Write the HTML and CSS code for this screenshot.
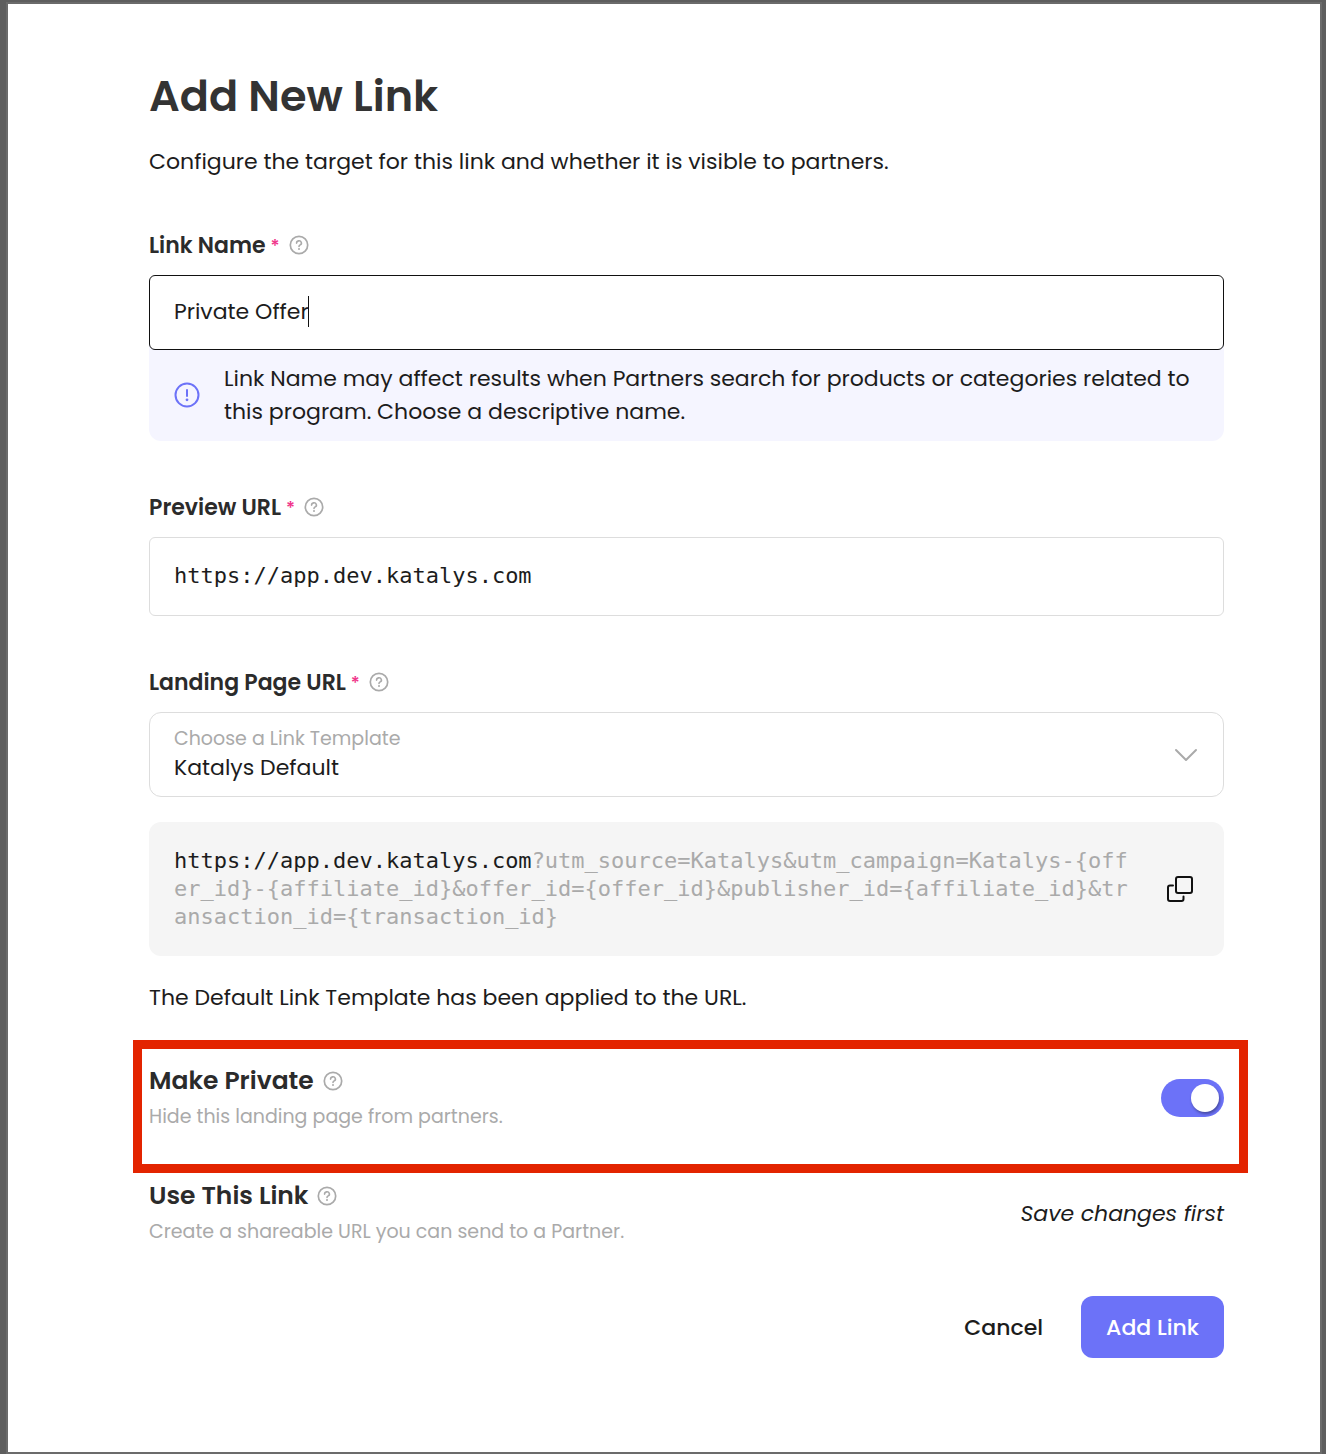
FILE: index.html
```html
<!DOCTYPE html>
<html lang="en">
<head>
    <meta charset="UTF-8">
    <meta name="viewport" content="width=device-width, initial-scale=1.0">
    <title>Add New Link</title>
    <link rel="stylesheet" href="styles.css">
</head>
<body>
    <!-- Shared icons -->
    <svg class="sprite" aria-hidden="true">
        <symbol id="icon-help" viewBox="0 0 20 20">
            <circle cx="10" cy="10" r="8.7" fill="none" stroke="currentColor" stroke-width="1.7"/>
            <path d="M7.6 8.1a2.4 2.2 0 1 1 3.6 1.8c-.8.5-1.2.8-1.2 1.6" fill="none" stroke="currentColor" stroke-width="1.6" stroke-linecap="round"/>
            <circle cx="10" cy="14" r="1" fill="currentColor"/>
        </symbol>
    </svg>

    <form class="dialog" onsubmit="event.preventDefault();">
        <h1>Add New Link</h1>
        <p class="intro">Configure the target for this link and whether it is visible to partners.</p>

        <div class="field">
            <div class="field-label">
                <label for="linkName">Link Name</label>
                <span class="required">*</span>
                <svg class="help"><use href="#icon-help"/></svg>
            </div>
            <div class="input-wrap">
                <input class="input active" type="text" id="linkName" value="Private Offer" required>
                <span class="caret"></span>
            </div>
            <div class="notice">
                <svg class="notice-icon" viewBox="0 0 26 26">
                    <circle cx="13" cy="13" r="11.5" fill="none" stroke="currentColor" stroke-width="2"/>
                    <path d="M13 8v6" stroke="currentColor" stroke-width="2" stroke-linecap="round"/>
                    <circle cx="13" cy="17.8" r="1.4" fill="currentColor"/>
                </svg>
                <p>Link Name may affect results when Partners search for products or categories related to this program. Choose a descriptive name.</p>
            </div>
        </div>

        <div class="field preview">
            <div class="field-label">
                <label for="previewUrl">Preview URL</label>
                <span class="required">*</span>
                <svg class="help"><use href="#icon-help"/></svg>
            </div>
            <input class="input mono" type="text" id="previewUrl" value="https://app.dev.katalys.com" required>
        </div>

        <div class="field">
            <div class="field-label">
                <label for="template">Landing Page URL</label>
                <span class="required">*</span>
                <svg class="help"><use href="#icon-help"/></svg>
            </div>
            <div class="select-wrap">
                <label class="select-hint" for="template">Choose a Link Template</label>
                <select id="template">
                    <option>Katalys Default</option>
                </select>
                <svg class="chevron" viewBox="0 0 24 14">
                    <path d="M2 2l10 10L22 2" fill="none" stroke="currentColor" stroke-width="2" stroke-linecap="round" stroke-linejoin="round"/>
                </svg>
            </div>
            <div class="url-box">
                <code>https://app.dev.katalys.com<span class="params">?utm_source=Katalys&amp;utm_campaign=Katalys-{offer_id}-{affiliate_id}&amp;offer_id={offer_id}&amp;publisher_id={affiliate_id}&amp;transaction_id={transaction_id}</span></code>
                <button class="copy" type="button" aria-label="Copy URL">
                    <svg viewBox="0 0 26 26" fill="none" stroke="currentColor" stroke-width="2" stroke-linejoin="round" stroke-linecap="round">
                        <rect x="9" y="1" width="16" height="16" rx="2"/>
                        <path d="M6 9.500H3a2 2 0 0 0-2 2V23a2 2 0 0 0 2 2h11.500a2 2 0 0 0 2-2v-2.500"/>
                    </svg>
                </button>
            </div>
            <p class="status">The Default Link Template has been applied to the URL.</p>
        </div>

        <div class="option highlight">
            <div>
                <h2><label for="private">Make Private</label> <svg class="help"><use href="#icon-help"/></svg></h2>
                <p class="sub">Hide this landing page from partners.</p>
            </div>
            <input class="toggle" type="checkbox" id="private" checked>
        </div>

        <div class="option">
            <div>
                <h2>Use This Link <svg class="help"><use href="#icon-help"/></svg></h2>
                <p class="sub">Create a shareable URL you can send to a Partner.</p>
            </div>
            <em>Save changes first</em>
        </div>

        <div class="actions">
            <button class="cancel" type="button">Cancel</button>
            <button class="submit" type="submit">Add Link</button>
        </div>
    </form>
</body>
</html>
```
FILE: styles.css
```css
* {
    box-sizing: border-box;
}
body {
    margin: 0;
    padding: 2px 4px 0 6px;
    background-color: #5e5e5e;
    font-family: Poppins, Inter, sans-serif;
    font-size: 22px;
    line-height: 33px;
    color: #1c1c1c;
}
h1, h2, p {
    margin: 0;
}
input, select, button {
    font: inherit;
    color: inherit;
}
.sprite {
    display: none;
}
.dialog {
    padding: 60px 96px 94px 141px;
    border: 2px solid #6b6b6b;
    background-color: #fff;
}
h1 {
    font-size: 43px;
    line-height: 64px;
    font-weight: 600;
    color: #333;
}
.intro {
    margin-top: 17px;
    margin-bottom: 50px;
}
.field-label {
    display: flex;
    align-items: center;
    height: 34px;
    margin-bottom: 13px;
    font-weight: 600;
    color: #2b2b2b;
}
.required {
    margin-left: 5px;
    color: #f0348a;
    font-size: 18px;
    font-weight: 500;
}
.help {
    flex: none;
    width: 20px;
    height: 20px;
    margin-left: 9px;
    color: #aaa;
}
.input-wrap {
    position: relative;
    z-index: 1;
}
.input {
    display: block;
    width: 100%;
    height: 75px;
    padding: 0 24px 2px;
    border: 1px solid #ddd;
    border-radius: 6px;
    background-color: #fff;
    outline: none;
}
.input.active {
    border-color: #111;
}
.mono {
    height: 79px;
    font-family: "DejaVu Sans Mono", monospace;
}
.caret {
    position: absolute;
    top: 21px;
    left: 159px;
    width: 1px;
    height: 31px;
    background-color: #111;
}
.notice {
    display: flex;
    align-items: center;
    gap: 24px;
    margin-top: -6px;
    padding: 18px 25px 13px;
    border-radius: 0 0 12px 12px;
    background-color: #f5f5ff;
}
.notice-icon {
    flex: none;
    width: 26px;
    height: 26px;
    color: #6c72f8;
}
.preview {
    margin: 49px 0;
}
.select-wrap {
    position: relative;
}
.select-wrap select {
    display: block;
    width: 100%;
    height: 85px;
    padding: 26px 60px 0 24px;
    border: 1px solid #ddd;
    border-radius: 12px;
    background-color: #fff;
    appearance: none;
}
.select-hint {
    position: absolute;
    top: 13px;
    left: 25px;
    font-size: 19px;
    line-height: 28px;
    color: #aaa;
}
.chevron {
    position: absolute;
    top: 36px;
    right: 26px;
    width: 24px;
    height: 14px;
    color: #aaa;
    pointer-events: none;
}
.url-box {
    display: flex;
    align-items: center;
    gap: 38px;
    margin-top: 25px;
    padding: 25px 31px 25px 25px;
    border-radius: 12px;
    background-color: #f5f5f5;
}
.url-box code {
    flex: 1;
    font-family: "DejaVu Sans Mono", monospace;
    font-size: 22px;
    line-height: 28px;
    word-break: break-all;
}
.params {
    color: #aaa;
}
.copy {
    flex: none;
    width: 26px;
    height: 26px;
    padding: 0;
    border: none;
    background: none;
    color: #111;
    cursor: pointer;
}
.copy svg {
    display: block;
}
.status {
    margin-top: 25px;
}
.option {
    display: flex;
    align-items: center;
    justify-content: space-between;
}
h2 {
    display: flex;
    align-items: center;
    font-size: 25px;
    line-height: 38px;
    font-weight: 600;
    color: #2b2b2b;
}
.sub {
    font-size: 19px;
    line-height: 34px;
    color: #aaa;
}
/* outline box around the option being explained */
.highlight {
    margin: 26px -24px 4px -16px;
    padding: 13px 15px 30px 7px;
    border: 9px solid #e32400;
}
.toggle {
    flex: none;
    width: 63px;
    height: 38px;
    margin: 0;
    padding: 5px;
    border-radius: 19px;
    background-color: #6c72f8;
    appearance: none;
    cursor: pointer;
}
.toggle::before {
    content: "";
    display: block;
    width: 28px;
    height: 28px;
    border-radius: 50%;
    background-color: #fff;
    box-shadow: 1px 2px 3px rgba(0, 0, 0, 0.35);
}
.toggle:checked::before {
    margin-left: auto;
}
.actions {
    display: flex;
    justify-content: flex-end;
    gap: 13px;
    margin-top: 47px;
}
.actions button {
    height: 62px;
    padding: 0 25px;
    border: none;
    border-radius: 12px;
    background: none;
    font-weight: 500;
    cursor: pointer;
}
.actions .submit {
    background-color: #6c72f8;
    color: #fff;
}
```
